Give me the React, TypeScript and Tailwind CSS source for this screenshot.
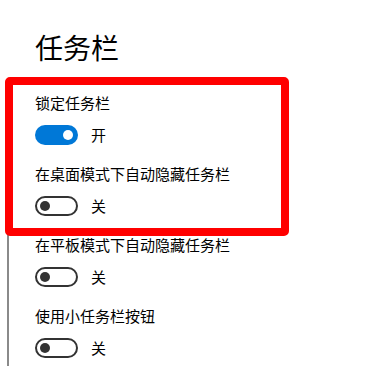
import React from 'react';

const font = { fontFamily: '"Noto Sans CJK SC", "Noto Sans", sans-serif' };

interface ToggleRowProps {
  label: string;
  on: boolean;
}

const ToggleRow: React.FC<ToggleRowProps> = ({ label, on }) => (
  <div className="flex flex-col">
    <span className="text-[15px] leading-[20px] text-black">{label}</span>
    <div className="mt-[12px] flex items-center gap-[13px]">
      {on ? (
        <div className="w-[43px] h-[20px] rounded-full bg-[#0078d7] flex items-center justify-end pr-[5px]">
          <div className="w-[10px] h-[10px] rounded-full bg-white" />
        </div>
      ) : (
        <div className="w-[43px] h-[20px] rounded-full border-2 border-[#333333] flex items-center pl-[3px]">
          <div className="w-[10px] h-[10px] rounded-full bg-[#333333]" />
        </div>
      )}
      <span className="text-[15px] leading-[20px] text-black">{on ? '开' : '关'}</span>
    </div>
  </div>
);

export default function App() {
  const rows = [
    { label: '锁定任务栏', on: true },
    { label: '在桌面模式下自动隐藏任务栏', on: false },
    { label: '在平板模式下自动隐藏任务栏', on: false },
    { label: '使用小任务栏按钮', on: false },
  ];

  return (
    <div className="relative w-[388px] h-[366px] bg-white overflow-hidden" style={font}>
      <h1 className="pt-[29px] pl-[35px] text-[28px] leading-[36px] font-normal text-black">任务栏</h1>

      <div className="mt-[24px] ml-[7px] border-l-2 border-[#8a8a8a] pl-[26px] pt-[4px] h-[300px] flex flex-col gap-[19px]">
        {rows.map((r) => (
          <ToggleRow key={r.label} label={r.label} on={r.on} />
        ))}
      </div>

      {/* annotation box */}
      <div className="absolute left-[5px] top-[77px] w-[284px] h-[159px] border-[8px] border-[#ff0000] rounded-[5px]" />
    </div>
  );
}
